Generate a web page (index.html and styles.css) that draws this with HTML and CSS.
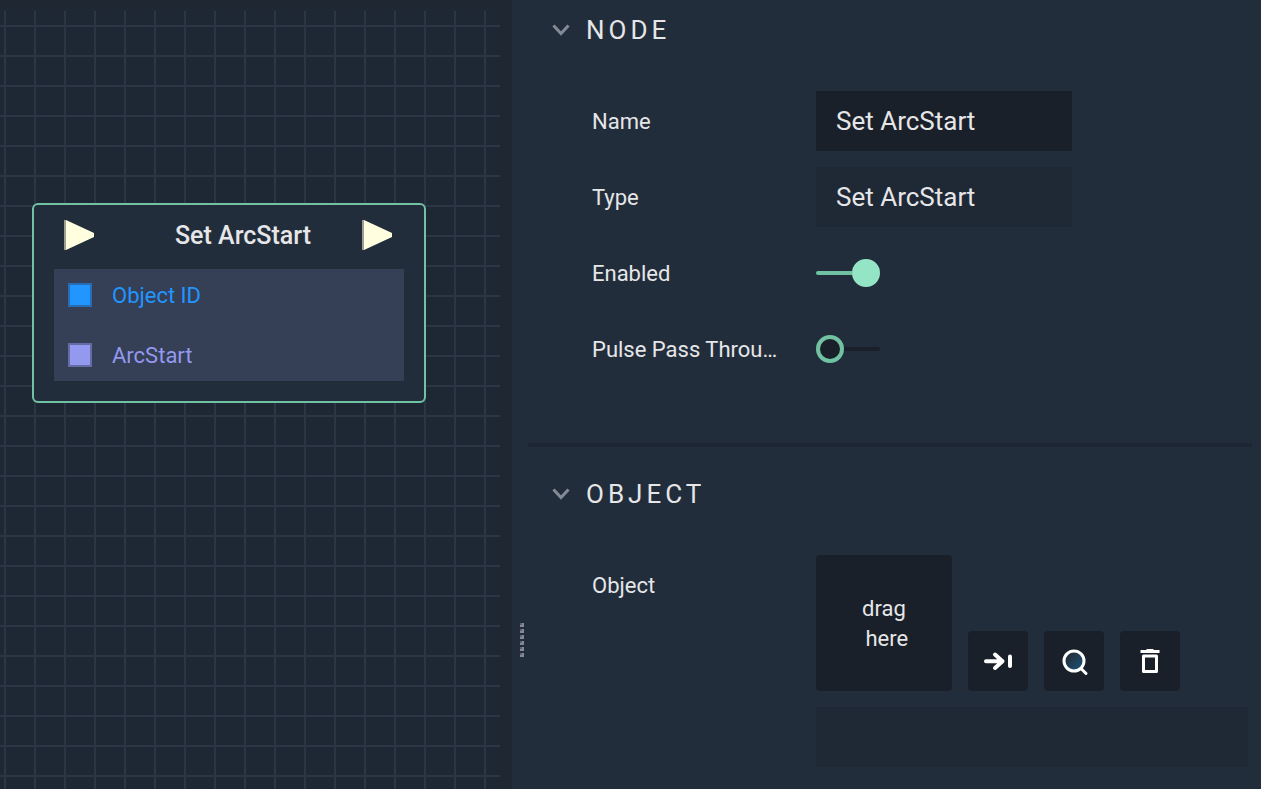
FILE: index.html
```html
<!DOCTYPE html>
<html lang="en">
<head>
<meta charset="utf-8">
<title>Node editor</title>
<link rel="stylesheet" href="styles.css">
</head>
<body>
<div class="editor">
  <main class="graph">
    <div class="graph-canvas">
      <article class="node">
        <header class="node-header">
          <svg class="pulse" viewBox="0 0 30 30" aria-hidden="true"><path d="M0 0h2l28 13v4L2 30H0z"/><path class="pulse-edge" d="M0 0h2v30H0z"/></svg>
          <h1 class="node-title">Set ArcStart</h1>
          <svg class="pulse" viewBox="0 0 30 30" aria-hidden="true"><path d="M0 0h2l28 13v4L2 30H0z"/><path class="pulse-edge" d="M0 0h2v30H0z"/></svg>
        </header>
        <ul class="ports">
          <li class="port port-id"><span class="socket"></span><span class="port-name">Object ID</span></li>
          <li class="port port-value"><span class="socket"></span><span class="port-name">ArcStart</span></li>
        </ul>
      </article>
    </div>
  </main>
  <aside class="inspector">
    <div class="splitter"><i></i><i></i><i></i><i></i><i></i><i></i></div>
    <div class="sections">
      <section class="section">
        <h2><button class="section-toggle" type="button"><svg class="chevron" viewBox="0 0 18 12" aria-hidden="true"><path d="M1.500 1.500 9 9.500l7.500-8"/></svg>NODE</button></h2>
        <div class="rows">
          <div class="row"><label class="label" for="name">Name</label><input class="field" id="name" type="text" value="Set ArcStart"></div>
          <div class="row"><label class="label" for="type">Type</label><input class="field readonly" id="type" type="text" value="Set ArcStart" readonly></div>
          <div class="row"><label class="label" for="enabled">Enabled</label><input class="switch" id="enabled" type="checkbox" checked></div>
          <div class="row"><label class="label" for="pulse">Pulse Pass Throu…</label><input class="switch" id="pulse" type="checkbox"></div>
        </div>
      </section>
      <section class="section">
        <h2><button class="section-toggle" type="button"><svg class="chevron" viewBox="0 0 18 12" aria-hidden="true"><path d="M1.500 1.500 9 9.500l7.500-8"/></svg>OBJECT</button></h2>
        <div class="rows">
          <div class="row"><label class="label" for="object">Object</label>
            <div class="object-picker">
              <div class="object-tools">
                <div class="drop">drag
 here</div>
                <button class="tool" type="button" aria-label="Go to object"><svg viewBox="0 0 60 60" aria-hidden="true"><path class="thick" d="M18 30.200h16.500M27 23.500l7.500 6.700-7.500 6.800"/><path class="thick" d="M42 25.500v9.500"/></svg></button>
                <button class="tool" type="button" aria-label="Find object"><svg viewBox="0 0 60 60" aria-hidden="true"><defs><linearGradient id="lens" x1="0" y1="0" x2="1" y2="1"><stop offset=".25" stop-color="#25313e"/><stop offset="1" stop-color="#17557f"/></linearGradient></defs><circle cx="30" cy="30" r="10" fill="url(#lens)"/><path d="M37 37.500l5 5"/></svg></button>
                <button class="tool" type="button" aria-label="Clear object"><svg viewBox="0 0 60 60" aria-hidden="true"><path class="solid" d="M20.500 19H26l1-1h6l1 1h5.500v3h-19z"/><path d="M23.500 25h13v15.500h-13z"/></svg></button>
              </div>
              <input class="field readonly" id="object" type="text" readonly>
            </div>
          </div>
        </div>
      </section>
    </div>
  </aside>
</div>
</body>
</html>
```
FILE: styles.css
```css
*, ::before, ::after { box-sizing: border-box; }
body {
  margin: 0;
  background: #1f2733;
  color: #e6e6e8;
  font: 22px/30px Roboto, sans-serif;
}
h1, h2, ul { margin: 0; padding: 0; font-weight: 400; }
.editor {
  display: grid;
  grid-template-columns: 512fr 749fr;
  min-height: 100vh;
}
.graph { display: flex; padding: 11px 12px 0 0; }
.graph-canvas {
  position: relative;
  flex: 1;
  background:
    repeating-linear-gradient(90deg, transparent 0 4px, #2a3643 4px 6px, transparent 6px 30px),
    repeating-linear-gradient(#1e2835 0 14px, #2a3643 14px 16px, #1e2835 16px 30px);
}
.node {
  position: absolute;
  left: 32px;
  top: 192px;
  width: 394px;
  padding: 0 20px 20px;
  border: 2px solid #70c2a2;
  border-radius: 6px;
  background: #222d3c;
}
.node-header {
  display: flex;
  align-items: center;
  justify-content: space-between;
  height: 64px;
  padding: 0 12px 4px 10px;
}
.pulse { width: 30px; height: 30px; fill: #ffffe0; }
.pulse .pulse-edge { fill: #9d9f92; }
.node-title {
  padding: 2px 0 0 30px;
  font-size: 25px;
  font-weight: 500;
  line-height: 30px;
}
.ports {
  display: grid;
  gap: 8px;
  background: #353f56;
  list-style: none;
}
.port {
  display: flex;
  align-items: center;
  gap: 20px;
  height: 52px;
  padding-left: 14px;
  color: #2196ff;
}
.port-name { padding-top: 2px; }
.socket {
  width: 24px;
  height: 24px;
  border: 2px solid #2a6cb3;
  background: #2196ff;
}
.port-value { color: #9399ee; }
.port-value .socket { border-color: #656ca5; background: #9399ee; }

.inspector {
  display: flex;
  background: #222d3c;
}
.splitter {
  display: flex;
  flex-direction: column;
  justify-content: flex-end;
  align-items: flex-end;
  gap: 2px;
  width: 12px;
  margin-right: 4px;
  padding-bottom: 132px;
}
.splitter i {
  width: 4px;
  height: 4px;
  background: linear-gradient(#5d6470, #5d6470) 0 0 / 2px 2px no-repeat #858991;
}
.sections { flex: 1; padding-right: 9px; }
.section + .section { border-top: 4px solid #1d2733; padding-top: 17px; }
.section-toggle {
  display: flex;
  align-items: center;
  gap: 16px;
  height: 58px;
  padding: 2px 0 0 24px;
  border: 0;
  background: none;
  color: inherit;
  font: 26px/30px Roboto, sans-serif;
  letter-spacing: 4px;
}
.chevron { width: 18px; height: 12px; fill: none; stroke: #858b95; stroke-width: 3; }
.rows {
  display: grid;
  gap: 16px;
  padding: 33px 4px 64px 64px;
}
.row { display: flex; align-items: center; min-height: 60px; }
.row:has(.object-picker) { align-items: flex-start; }
.section:last-child .rows { padding-bottom: 20px; }
.label {
  flex: none;
  width: 192px;
  margin-right: 32px;
  padding-top: 2px;
  line-height: 58px;
  overflow: hidden;
  text-overflow: ellipsis;
  white-space: nowrap;
}
.field {
  width: 256px;
  height: 60px;
  padding: 0 20px;
  border: 0;
  outline: 0;
  background: #1a2029;
  color: inherit;
  font: 26px/30px Roboto, sans-serif;
}
.readonly { background: #1f2835; }
.switch {
  display: flex;
  align-items: center;
  appearance: none;
  width: 64px;
  height: 28px;
  margin: 0;
}
.switch::before {
  content: "";
  width: 28px;
  height: 28px;
  border: 4px solid #70c2a2;
  border-radius: 50%;
  background: #1a2029;
}
.switch::after {
  content: "";
  flex: 1;
  height: 4px;
  border-radius: 0 2px 2px 0;
  background: #1a2029;
}
.switch:checked { flex-direction: row-reverse; }
.switch:checked::before { border-color: #93e5c5; background: #93e5c5; }
.switch:checked::after { border-radius: 2px 0 0 2px; background: #70c2a2; }
.object-picker { display: grid; flex: 1; gap: 16px; }
.object-picker .field { width: 100%; }
.object-tools { display: flex; align-items: flex-end; gap: 16px; }
.drop {
  display: grid;
  place-items: center;
  width: 136px;
  height: 136px;
  padding-top: 2px;
  border-radius: 4px;
  background: #1a2029;
  text-align: center;
  white-space: break-spaces;
}
.tool {
  width: 60px;
  height: 60px;
  padding: 0;
  border: 0;
  border-radius: 4px;
  background: #1a2029;
}
.tool svg {
  display: block;
  fill: none;
  stroke: #fff;
  stroke-width: 3;
  stroke-linecap: round;
  stroke-linejoin: round;
}
.tool .thick { stroke-width: 4; }
.tool .solid { fill: #fff; stroke: none; }
```
